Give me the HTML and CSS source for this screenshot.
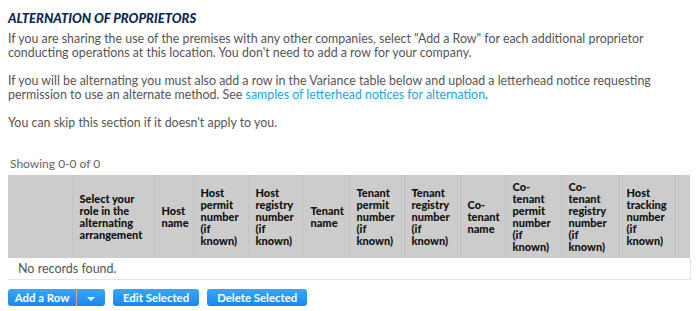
FILE: index.html
```html
<!DOCTYPE html>
<html lang="en">
<head>
    <meta charset="UTF-8">
    <title>Alternation of Proprietors</title>
    <link rel="stylesheet" href="styles.css">
</head>
<body>
    <div class="section">
        <h2>ALTERNATION OF PROPRIETORS</h2>
        <p>If you are sharing the use of the premises with any other companies, select "Add a Row" for each additional proprietor conducting operations at this location. You don't need to add a row for your company.</p>
        <p>If you will be alternating you must also add a row in the Variance table below and upload a letterhead notice requesting permission to use an alternate method. See <a href="#">samples of letterhead notices for alternation</a>.</p>
        <p>You can skip this section if it doesn't apply to you.</p>

        <div class="showing">Showing 0-0 of 0</div>

        <table class="grid">
            <colgroup>
                <col style="width:64px">
                <col style="width:82px">
                <col style="width:39px">
                <col style="width:55px">
                <col style="width:55px">
                <col style="width:46px">
                <col style="width:55px">
                <col style="width:56px">
                <col style="width:45px">
                <col style="width:56px">
                <col style="width:58px">
                <col style="width:56px">
                <col style="width:15px">
            </colgroup>
            <thead>
                <tr>
                    <th></th>
                    <th>Select your role in the alternating arrangement</th>
                    <th>Host name</th>
                    <th>Host permit number (if known)</th>
                    <th>Host registry number (if known)</th>
                    <th>Tenant name</th>
                    <th>Tenant permit number (if known)</th>
                    <th>Tenant registry number (if known)</th>
                    <th>Co-tenant name</th>
                    <th>Co-tenant permit number (if known)</th>
                    <th>Co-tenant registry number (if known)</th>
                    <th>Host tracking number (if known)</th>
                    <th></th>
                </tr>
            </thead>
            <tbody>
                <tr>
                    <td colspan="13" class="empty">No records found.</td>
                </tr>
            </tbody>
        </table>

        <div class="actions">
            <div class="split">
                <button class="btn main">Add a Row</button>
                <button class="btn caret"><span class="arrow"></span></button>
            </div>
            <button class="btn">Edit Selected</button>
            <button class="btn">Delete Selected</button>
        </div>
    </div>
</body>
</html>
```

FILE: styles.css
```css
body {
    margin: 0;
    padding: 8px;
    font-family: Lato, Arial, sans-serif;
    color: #555;
    background: #fff;
}
h2 {
    margin: 2px 0 5px;
    font-size: 13px;
    font-weight: 900;
    font-style: italic;
    color: #0a2855;
    line-height: 17px;
}
p {
    margin: 0 0 14px;
    font-size: 12.4px;
    line-height: 14px;
}
a {
    color: #1ea3e6;
    text-decoration: none;
}
.showing {
    margin: 27px 0 4px 2px;
    font-size: 12px;
    line-height: 14px;
    color: #666;
}
.grid {
    table-layout: fixed;
    border-collapse: collapse;
    width: 682px;
}
.grid th {
    background: #cccccc;
    height: 83px;
    padding: 0 4px 0 7px;
    border-left: 1px solid #c2c2c2;
    text-align: left;
    vertical-align: middle;
    font-family: Lato, Arial, sans-serif;
    font-weight: 900;
    font-size: 11px;
    line-height: 12px;
    color: #111;
}
.grid th:first-child {
    border-left: none;
}
.grid td.empty {
    height: 21px;
    padding: 0 10px;
    font-size: 12.5px;
    color: #555;
    border-right: 1px solid #e6e6e6;
    border-bottom: 1px solid #e6e6e6;
}
.actions {
    display: flex;
    gap: 8px;
    margin-top: 9px;
}
.split {
    display: flex;
}
.btn {
    height: 17px;
    padding: 0 10px;
    border: none;
    border-radius: 3px;
    background: linear-gradient(#3aa6f7, #1589f0);
    color: #fff;
    font-family: Lato, Arial, sans-serif;
    font-weight: bold;
    font-size: 11.4px;
    line-height: 17px;
    white-space: nowrap;
}
.split .main {
    border-radius: 3px 0 0 3px;
    border-right: 1px solid #d8a690;
    width: 69px;
    padding: 0;
}
.split .caret {
    border-radius: 0 3px 3px 0;
    width: 28px;
    padding: 0;
}
.arrow {
    display: inline-block;
    border-left: 4px solid transparent;
    border-right: 4px solid transparent;
    border-top: 4px solid #fff;
    vertical-align: middle;
}
```
